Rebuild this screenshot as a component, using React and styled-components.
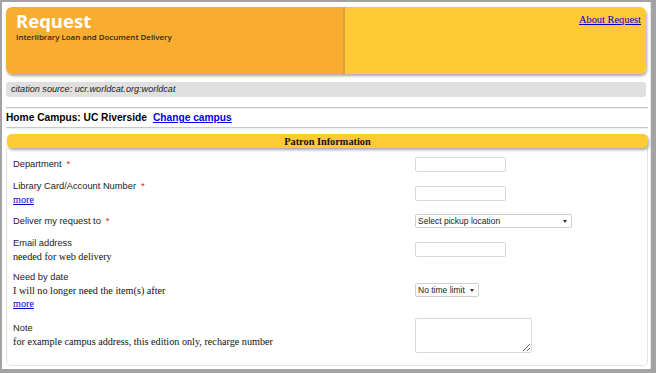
import React from "react";
import styled, { createGlobalStyle } from "styled-components";

const Global = createGlobalStyle`
  html, body { margin: 0; padding: 0; }
  body { background: #a3a3a3; width: 656px; height: 373px; overflow: hidden; font-family: "Liberation Sans", Arial, sans-serif; }
`;

const Page = styled.div`
  margin: 2px 4px 4px 2px;
  width: 649px;
  height: 367px;
  background: #fff;
  border-right: 1px solid #e6e6e6;
  padding: 5px 2px 0 4px;
  box-sizing: border-box;
  display: flex;
  flex-direction: column;
`;

const Header = styled.header`
  display: flex;
  flex: none;
  height: 67px;
  border-radius: 6px;
  box-shadow: 1px 2px 3px rgba(0,0,0,0.35);
  overflow: hidden;
  margin-right: 2px;
`;

const Brand = styled.div`
  width: 339px;
  background: #f8ad31;
  border-right: 2px solid #d9a13a;
  padding: 4px 0 0 10px;
  box-sizing: border-box;
`;

const Title = styled.div`
  font-family: "Open Sans", sans-serif;
  font-weight: 700;
  font-size: 18.5px;
  line-height: 20px;
  color: #fff;
`;

const Subtitle = styled.div`
  font-family: "Open Sans", sans-serif;
  font-weight: 600;
  font-size: 7.9px;
  line-height: 10px;
  color: #33250e;
  margin-top: 1px;
`;

const HeaderRight = styled.div`
  flex: 1;
  background: #ffca33;
  display: flex;
  justify-content: flex-end;
  align-items: flex-start;
  padding: 7px 5px 0 0;
`;

const SerifLink = styled.a`
  font-family: "Liberation Serif", "Times New Roman", serif;
  font-size: 10.4px;
  color: #00c;
  text-decoration: underline;
`;

const Citation = styled.div`
  flex: none;
  margin-top: 8px;
  margin-right: 2px;
  height: 15px;
  background: #e0e0e0;
  border-radius: 3px;
  padding-left: 5px;
  font-style: italic;
  font-size: 9.1px;
  line-height: 15px;
  color: #1a1a1a;
`;

const Rule = styled.hr`
  flex: none;
  border: none;
  border-top: 1px solid #c8c8c8;
  margin: ${p => p.$top}px 0 0 0;
  height: 1px;
  background: #efefef;
`;

const Campus = styled.div`
  flex: none;
  height: 17px;
  font-size: 10.2px;
  font-weight: 700;
  line-height: 17px;
  color: #000;
  display: flex;
  gap: 6px;
`;

const CampusLink = styled.a`
  color: #00e;
  text-decoration: underline;
`;

const SectionBar = styled.div`
  flex: none;
  margin-top: 5px;
  margin-left: 1px;
  height: 14px;
  background: #ffcb33;
  border-radius: 5px;
  box-shadow: 1px 2px 3px rgba(0,0,0,0.35);
  text-align: center;
  font-family: "Liberation Serif", "Times New Roman", serif;
  font-weight: 700;
  font-size: 10.3px;
  line-height: 15px;
  color: #111;
  position: relative;
  z-index: 1;
`;

const Panel = styled.div`
  flex: 1;
  margin-bottom: 3px;
  border: 1px solid #e2e2e2;
  border-top: none;
  border-radius: 0 0 5px 5px;
  padding: 9px 0 0 0;
  display: flex;
  flex-direction: column;
  gap: 8.2px;
`;

const Row = styled.div`
  display: grid;
  grid-template-columns: 408px 1fr;
  align-items: center;
`;

const Label = styled.div`
  padding-left: 6px;
  font-size: 9.3px;
  line-height: 13px;
  color: #222;
`;

const Req = styled.span`
  color: #e0242a;
  margin-left: 5px;
`;

const Note = styled.div`
  font-family: "Liberation Serif", "Times New Roman", serif;
  font-size: 10.2px;
  line-height: 13px;
  color: #111;
`;

const More = styled(SerifLink)`
  display: block;
  line-height: 13px;
  font-size: 10.2px;
`;

const Input = styled.input`
  display: block;
  width: 91px;
  height: 15px;
  box-sizing: border-box;
  border: 1px solid #d8d8d8;
  border-radius: 2px;
  margin: 0;
  padding: 0;
`;

const SelectBox = styled.div`
  position: relative;
  width: ${p => p.$w}px;
  height: 14px;
  box-sizing: border-box;
  border: 1px solid #cfcfcf;
  border-radius: 2px;
  background: #fff;
  font-size: 8.5px;
  line-height: 12px;
  color: #222;
  padding-left: 2px;
  white-space: nowrap;
  cursor: default;
`;

const Arrow = styled.span`
  position: absolute;
  right: 4px;
  top: 5px;
  width: 0;
  height: 0;
  border-left: 2.5px solid transparent;
  border-right: 2.5px solid transparent;
  border-top: 3px solid #333;
`;

const TextArea = styled.textarea`
  width: 117px;
  height: 35px;
  box-sizing: border-box;
  border: 1px solid #d8d8d8;
  border-radius: 2px;
  margin: 0;
  padding: 0;
  display: block;
`;

const Select = ({ w, children }) => (
  <SelectBox $w={w} role="combobox">
    {children}
    <Arrow />
  </SelectBox>
);

export default function App() {
  return (
    <>
      <Global />
      <Page>
        <Header>
          <Brand>
            <Title>Request</Title>
            <Subtitle>Interlibrary Loan and Document Delivery</Subtitle>
          </Brand>
          <HeaderRight>
            <SerifLink href="#">About Request</SerifLink>
          </HeaderRight>
        </Header>
        <Citation>citation source: ucr.worldcat.org:worldcat</Citation>
        <Rule $top={10} />
        <Campus>
          <span>Home Campus: UC Riverside</span>
          <CampusLink href="#">Change campus</CampusLink>
        </Campus>
        <Rule $top={1} />
        <SectionBar>Patron Information</SectionBar>
        <Panel>
          <Row>
            <Label>Department<Req>*</Req></Label>
            <div><Input type="text" /></div>
          </Row>
          <Row>
            <Label>
              Library Card/Account Number<Req>*</Req>
              <More href="#">more</More>
            </Label>
            <div><Input type="text" /></div>
          </Row>
          <Row>
            <Label>Deliver my request to<Req>*</Req></Label>
            <Select w={157}>Select pickup location</Select>
          </Row>
          <Row>
            <Label>
              Email address
              <Note>needed for web delivery</Note>
            </Label>
            <div><Input type="text" /></div>
          </Row>
          <Row>
            <Label>
              Need by date
              <Note>I will no longer need the item(s) after</Note>
              <More href="#">more</More>
            </Label>
            <Select w={64}>No time limit</Select>
          </Row>
          <Row>
            <Label>
              Note
              <Note>for example campus address, this edition only, recharge number</Note>
            </Label>
            <div><TextArea /></div>
          </Row>
        </Panel>
      </Page>
    </>
  );
}
